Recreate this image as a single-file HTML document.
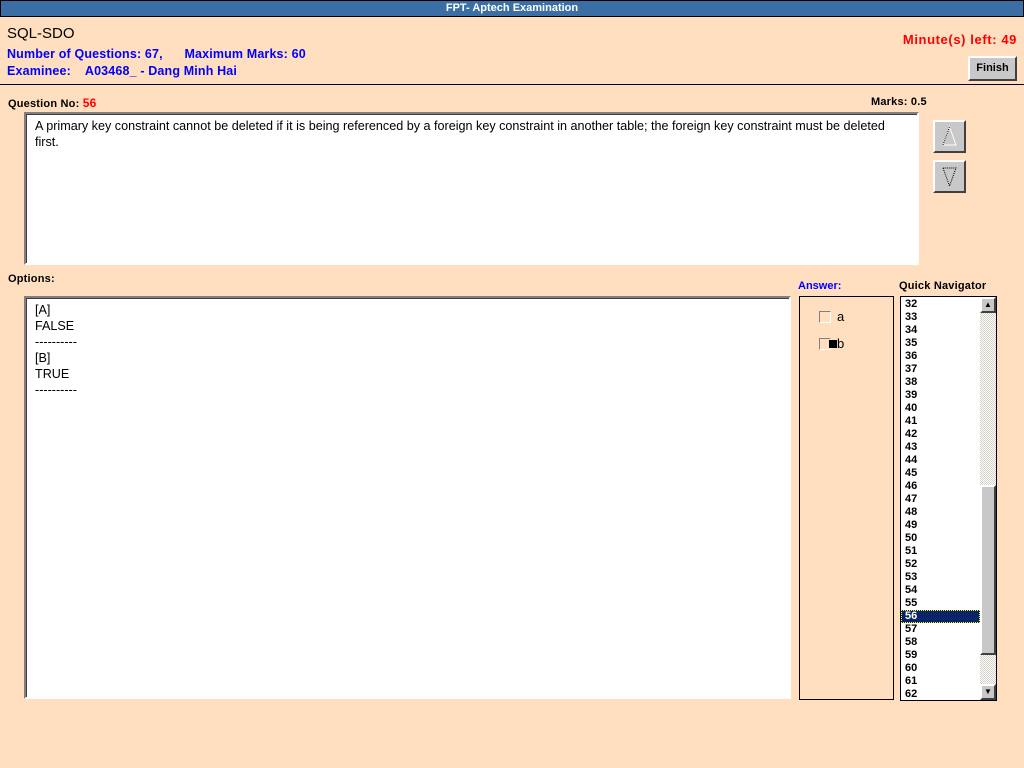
<!DOCTYPE html>
<html><head><meta charset="utf-8"><style>
*{margin:0;padding:0;box-sizing:border-box}
body{width:1024px;height:768px;background:#FFDFC0;position:relative;overflow:hidden;font-family:"Liberation Sans",Tahoma,sans-serif;}
.a{position:absolute;white-space:nowrap}
.b{font-weight:bold;font-size:11px;letter-spacing:0.2px}
.blue{color:#0000FF;font-weight:bold;font-size:12.5px;letter-spacing:0.15px}
.box{position:absolute;background:#fff;border:2px solid;border-color:#808080 #fff #fff #808080;box-shadow:inset 1px 1px 0 #404040;white-space:nowrap;overflow:hidden}
.btn{position:absolute;background:#C8C8C8;border:2px solid;border-color:#fff #404040 #404040 #fff}
.nav div{height:13px;line-height:13px;font-weight:bold;font-size:11px;padding-left:4px}
</style></head><body>
<div class="a" style="left:0;top:0;width:1024px;height:17px;background:#3A6EA5;border:1px solid #000;color:#fff;font-weight:bold;font-size:11px;text-align:center;line-height:15px">FPT- Aptech Examination</div>
<div class="a" style="left:7px;top:25px;font-size:15px">SQL-SDO</div>
<div class="a blue" style="left:7px;top:47px">Number of Questions: 67,&nbsp;&nbsp;&nbsp;&nbsp;&nbsp; Maximum Marks: 60</div>
<div class="a blue" style="left:7px;top:64px">Examinee:&nbsp;&nbsp;&nbsp; A03468_ - Dang Minh Hai</div>
<div class="a" style="right:7px;top:32px;color:#FF0000;font-weight:bold;font-size:13px;letter-spacing:0.6px">Minute(s) left: 49</div>
<div class="btn" style="left:968px;top:56px;width:49px;height:25px;font-weight:bold;font-size:11px;text-align:center;line-height:20px">Finish</div>
<div class="a" style="left:0;top:84px;width:1024px;height:1px;background:#000"></div>
<div class="a b" style="left:8px;top:96px">Question No: <span style="color:#f00;font-size:12px">56</span></div>
<div class="a b" style="left:871px;top:96px">Marks: 0.5</div>
<div class="box" style="left:24px;top:112px;width:895px;height:153px;padding:4px 0 0 9px;font-size:12.6px;line-height:16px">A primary key constraint cannot be deleted if it is being referenced by a foreign key constraint in another table; the foreign key constraint must be deleted<br>first.</div>
<div class="btn" style="left:933px;top:120px;width:33px;height:33px"><svg width="29" height="29"><path d="M8 23 L14.5 5 L21 23 Z" fill="none" stroke="#fff" stroke-width="1"/><path d="M8 23 L14.5 5" stroke="#000" stroke-dasharray="1 1"/></svg></div>
<div class="btn" style="left:933px;top:160px;width:33px;height:33px"><svg width="29" height="29"><path d="M8 6 L14.5 24 L21 6 Z" fill="none" stroke="#000" stroke-width="1" stroke-dasharray="1 1"/></svg></div>
<div class="a b" style="left:8px;top:273px">Options:</div>
<div class="box" style="left:24px;top:296px;width:767px;height:403px;padding:4px 0 0 9px;font-size:12.6px;line-height:16px">[A]<br>FALSE<br>----------<br>[B]<br>TRUE<br>----------</div>
<div class="a" style="left:798px;top:280px;color:#0000FF;font-weight:bold;font-size:11px">Answer:</div>
<div class="a" style="left:799px;top:296px;width:95px;height:404px;border:1px solid #000"></div>
<div class="a" style="left:819px;top:311px;width:12px;height:12px;border:1px solid;border-color:#808080 #fff #fff #808080;background:#FFDFC0"></div>
<div class="a" style="left:837px;top:309px;font-size:13px">a</div>
<div class="a" style="left:819px;top:338px;width:12px;height:12px;border:1px solid;border-color:#808080 #fff #fff #808080;background:#FFDFC0"></div>
<div class="a" style="left:829px;top:340px;width:8px;height:8px;background:#000"></div>
<div class="a" style="left:837px;top:336px;font-size:13px">b</div>
<div class="a b" style="left:899px;top:280px">Quick Navigator</div>
<div class="a" style="left:900px;top:296px;width:97px;height:405px;border:1px solid #000;background:#fff;overflow:hidden">
<div class="nav" style="position:absolute;left:0;top:1px;width:79px">
<div>32</div><div>33</div><div>34</div><div>35</div><div>36</div><div>37</div><div>38</div><div>39</div><div>40</div><div>41</div><div>42</div><div>43</div><div>44</div><div>45</div><div>46</div><div>47</div><div>48</div><div>49</div><div>50</div><div>51</div><div>52</div><div>53</div><div>54</div><div>55</div><div style="background:#0A246A;color:#fff;outline:1px dotted #ff0;outline-offset:-1px">56</div><div>57</div><div>58</div><div>59</div><div>60</div><div>61</div><div>62</div>
</div>
<div style="position:absolute;left:79px;top:0;width:16px;height:403px;background:repeating-conic-gradient(#d4d0c8 0 25%,#fff 0 50%) 0 0/2px 2px"></div>
<div class="btn" style="left:79px;top:0;width:16px;height:16px;font-size:8px;text-align:center;line-height:11px">▲</div>
<div class="btn" style="left:79px;top:188px;width:16px;height:170px"></div>
<div class="btn" style="left:79px;top:387px;width:16px;height:16px;font-size:8px;text-align:center;line-height:11px">▼</div>
</div>
</body></html>
